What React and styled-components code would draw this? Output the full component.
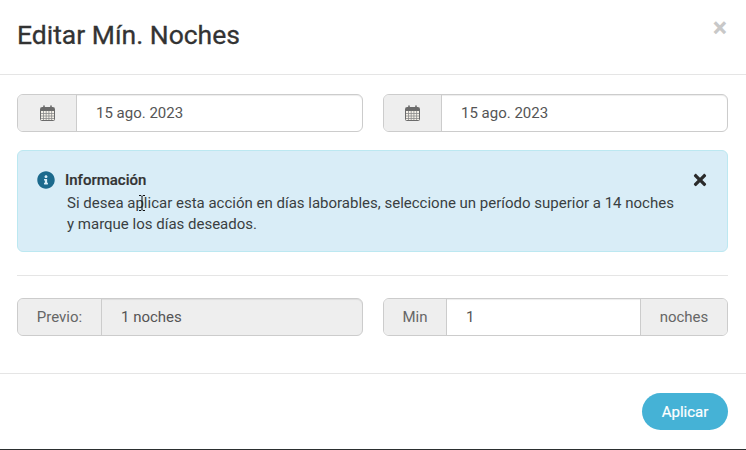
import React from 'react'
import styled, { createGlobalStyle } from 'styled-components'
import { FaInfoCircle, FaTimes } from 'react-icons/fa'

const Global = createGlobalStyle`
  html, body { margin: 0; padding: 0; background: #fff; }
  body { font-family: Roboto, "Liberation Sans", sans-serif; color: #555; overflow: hidden; }
  * { box-sizing: border-box; }
`

const Modal = styled.div`
  width: 746px;
  height: 450px;
  background: #fff;
  display: flex;
  flex-direction: column;
  border-bottom: 1px solid #2b2f30;
`

const Header = styled.header`
  height: 75px;
  flex: none;
  display: flex;
  justify-content: space-between;
  align-items: flex-start;
  padding: 18px 18px 0 18px;
  border-bottom: 1px solid #e5e5e5;
`

const Title = styled.h4`
  margin: 0 0 0 -1px;
  font-size: 26.5px;
  line-height: 34px;
  font-weight: 400;
  color: #333;
  -webkit-text-stroke: 0.3px #333;
`

const Close = styled.span`
  font-size: 27px;
  line-height: 20px;
  font-weight: 700;
  color: #c8c8c8;
  margin-right: 1px;
`

const Body = styled.main`
  flex: none;
  height: 299px;
  padding: 19px 18px 0 17px;
  border-bottom: 1px solid #e5e5e5;
`

const Row = styled.div`
  display: grid;
  grid-template-columns: 346px 345px;
  gap: 20px;
`

const Group = styled.div`
  display: flex;
  height: 38px;
  border: 1px solid #ccc;
  border-radius: 6px;
  overflow: hidden;
  font-size: 15px;
  color: #555;
  background: ${p => (p.$muted ? '#eee' : '#fff')};
  box-shadow: inset 0 1px 1px rgba(0, 0, 0, 0.075);
`

const Addon = styled.div`
  flex: none;
  width: ${p => p.$width}px;
  display: flex;
  align-items: center;
  justify-content: center;
  background: #eee;
  color: #666;
  ${p => (p.$end ? 'border-left' : 'border-right')}: 1px solid #ccc;
`

const Value = styled.div`
  flex: 1;
  display: flex;
  align-items: center;
  padding-left: ${p => p.$pad || 19}px;
`

const Alert = styled.div`
  position: relative;
  margin-top: 18px;
  width: 711px;
  height: 102px;
  padding: 20px 20px 0 19px;
  background: #d9edf7;
  border: 1px solid #bce8f1;
  border-radius: 6px;
  display: flex;
  color: #3a3f42;
`

const InfoIcon = styled(FaInfoCircle)`
  flex: none;
  font-size: 18px;
  color: #1c6a8d;
`

const AlertText = styled.div`
  margin-left: 10px;
  font-size: 15px;
  line-height: 21px;
`

const AlertTitle = styled.div`
  font-size: 15px;
  font-weight: 500;
  line-height: 18px;
  color: #333;
  margin-bottom: 4px;
  -webkit-text-stroke: 0.2px #333;
`

const AlertMessage = styled.div`
  margin-left: 2px;
  width: 615px;
`

const Dismiss = styled(FaTimes)`
  position: absolute;
  top: 20px;
  right: 18px;
  font-size: 18px;
  color: #2b2b2b;
`

const Cursor = styled.svg`
  position: absolute;
  left: 120px;
  top: 44px;
`

const Divider = styled.hr`
  border: 0;
  height: 1px;
  width: 711px;
  background: #e5e5e5;
  margin: 23px 0 22px;
`

const Footer = styled.footer`
  flex: 1;
  display: flex;
  justify-content: flex-end;
  padding: 19px 18px 0 0;
`

const Button = styled.button`
  width: 86px;
  height: 37px;
  border: 0;
  border-radius: 19px;
  background: #45b2d6;
  color: #fff;
  font: 400 15px Roboto, "Liberation Sans", sans-serif;
  -webkit-text-stroke: 0.2px #fff;
`

const CalendarIcon = () => (
  <svg width="15" height="16" viewBox="0 0 15 16">
    <rect x="0.5" y="2.5" width="14" height="13" rx="1" fill="#f4f0e8" stroke="#6b6b6b" />
    <rect x="1" y="3" width="13" height="3" fill="#6b6b6b" />
    <path d="M1 8.5h13M1 11h13M1 13.5h13M3.5 6v9M6.2 6v9M8.9 6v9M11.6 6v9" stroke="#8a8a8a" strokeWidth="0.8" />
    <path d="M4 1v3M11 1v3" stroke="#6b6b6b" strokeWidth="1.6" strokeLinecap="round" />
  </svg>
)

const DateField = ({ value, width }) => (
  <Group>
    <Addon $width={width}><CalendarIcon /></Addon>
    <Value>{value}</Value>
  </Group>
)

export default function App() {
  return (
    <Modal>
      <Global />
      <Header>
        <Title>Editar Mín. Noches</Title>
        <Close>×</Close>
      </Header>
      <Body>
        <Row>
          <DateField value="15 ago. 2023" width={59} />
          <DateField value="15 ago. 2023" width={58} />
        </Row>
        <Alert>
          <InfoIcon />
          <AlertText>
            <AlertTitle>Información</AlertTitle>
            <AlertMessage>
              Si desea aplicar esta acción en días laborables, seleccione un período superior a 14 noches
              y marque los días deseados.
            </AlertMessage>
          </AlertText>
          <Dismiss />
          <Cursor width="8" height="16" viewBox="0 0 8 16">
            <path d="M1 .5h2l1 1 1-1h2M4 1.5v13M1 15.5h2l1-1 1 1h2" fill="none" stroke="#111" strokeWidth="1" />
          </Cursor>
        </Alert>
        <Divider />
        <Row>
          <Group $muted>
            <Addon $width={84}>Previo:</Addon>
            <Value>1 noches</Value>
          </Group>
          <Group>
            <Addon $width={63}>Min</Addon>
            <Value>1</Value>
            <Addon $width={87} $end>noches</Addon>
          </Group>
        </Row>
      </Body>
      <Footer>
        <Button>Aplicar</Button>
      </Footer>
    </Modal>
  )
}
